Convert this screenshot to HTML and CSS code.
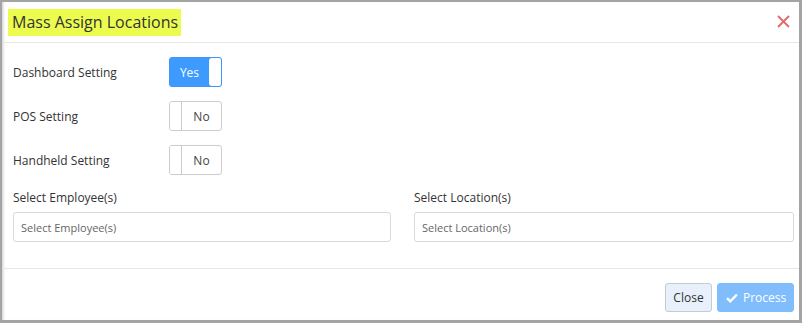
FILE: index.html
```html
<!DOCTYPE html>
<html lang="en">
<head>
    <meta charset="UTF-8">
    <meta name="viewport" content="width=device-width, initial-scale=1.0">
    <title>Mass Assign Locations</title>
    <link rel="stylesheet" href="styles.css">
</head>
<body>
<div class="modal">
    <div class="modal-header">
        <h1 class="modal-title"><span class="highlight">Mass Assign Locations</span></h1>
        <button class="close-x" aria-label="Close">
            <svg width="13" height="13" viewBox="0 0 13 13">
                <path d="M1 1 L12 12 M12 1 L1 12" stroke="#e36a6a" stroke-width="1.8" fill="none"/>
            </svg>
        </button>
    </div>

    <div class="modal-body">
        <div class="setting-row">
            <span class="setting-label">Dashboard Setting</span>
            <div class="toggle on">
                <span class="toggle-text">Yes</span>
                <span class="toggle-handle"></span>
            </div>
        </div>
        <div class="setting-row">
            <span class="setting-label">POS Setting</span>
            <div class="toggle">
                <span class="toggle-handle"></span>
                <span class="toggle-text">No</span>
            </div>
        </div>
        <div class="setting-row">
            <span class="setting-label">Handheld Setting</span>
            <div class="toggle">
                <span class="toggle-handle"></span>
                <span class="toggle-text">No</span>
            </div>
        </div>

        <div class="select-grid">
            <div class="field">
                <label class="field-label">Select Employee(s)</label>
                <div class="select-box">Select Employee(s)</div>
            </div>
            <div class="field">
                <label class="field-label">Select Location(s)</label>
                <div class="select-box">Select Location(s)</div>
            </div>
        </div>
    </div>

    <div class="modal-footer">
        <button class="btn btn-close">Close</button>
        <button class="btn btn-process">
            <svg class="check" width="12" height="10" viewBox="0 0 12 10">
                <path d="M1 5.2 L4.3 8.3 L11 1.5" stroke="#fff" stroke-width="2.4" fill="none"/>
            </svg>
            Process
        </button>
    </div>
</div>
</body>
</html>
```

FILE: styles.css
```css
* {
    box-sizing: border-box;
}

body {
    margin: 0;
    font-family: 'Open Sans', sans-serif;
    color: #333;
    background: #fff;
}

.modal {
    width: 802px;
    height: 323px;
    border-style: solid;
    border-color: #a4a4a4;
    border-width: 2px 3px 3px 2px;
    box-shadow: inset 3px 0 3px -2px #c8c8c8;
    background: #fff;
}

.modal-header {
    height: 41px;
    display: flex;
    align-items: center;
    justify-content: space-between;
    padding: 0 9px 0 6px;
    border-bottom: 1px solid #e6e6e6;
}

.modal-title {
    margin: 0;
    font-size: 16px;
    font-weight: normal;
    color: #333;
}

.highlight {
    background: #ebfc4f;
    padding: 2px 3px 3px 4px;
}

.close-x {
    border: 0;
    background: none;
    padding: 0;
    display: flex;
    margin-top: -1px;
}

.modal-body {
    height: 225px;
    padding: 14px 5px 0 11px;
}

.setting-row {
    display: flex;
    align-items: center;
    height: 30px;
    margin-bottom: 14px;
}

.setting-label {
    width: 156px;
    font-size: 12px;
}

.toggle {
    width: 53px;
    height: 30px;
    display: flex;
    border: 1px solid #ccc;
    border-radius: 3px;
    overflow: hidden;
    font-size: 12px;
    color: #444;
}

.toggle-text {
    flex: 1;
    display: flex;
    align-items: center;
    justify-content: center;
}

.toggle-handle {
    width: 12px;
    background: #fff;
    border-right: 1px solid #ccc;
}

.toggle.on {
    border-color: #3b96f5;
    background: #3d9bff;
    color: #fff;
}

.toggle.on .toggle-handle {
    border-right: 0;
    border-radius: 3px 0 0 3px;
}

.select-grid {
    display: grid;
    grid-template-columns: 378px 380px;
    gap: 23px;
}

.field-label {
    display: block;
    font-size: 12px;
    line-height: 17px;
    margin-bottom: 6px;
}

.select-box {
    height: 30px;
    border: 1px solid #d9d9d9;
    border-radius: 3px;
    padding: 0 7px;
    display: flex;
    align-items: center;
    font-size: 11px;
    color: #666;
}

.modal-footer {
    border-top: 1px solid #e6e6e6;
    padding: 14px 5px 0 0;
    display: flex;
    justify-content: flex-end;
    gap: 5px;
}

.btn {
    height: 29px;
    border-radius: 3px;
    font-family: 'Open Sans', sans-serif;
    font-size: 12px;
    display: flex;
    align-items: center;
    gap: 5px;
}

.btn-close {
    width: 47px;
    justify-content: center;
    background: #e8f1fb;
    border: 1px solid #c6cbd1;
    color: #333;
}

.btn-process {
    width: 77px;
    padding: 0 8px;
    background: #80bdfd;
    border: 1px solid #80bdfd;
    color: #fff;
}

.check {
    flex-shrink: 0;
}
```
